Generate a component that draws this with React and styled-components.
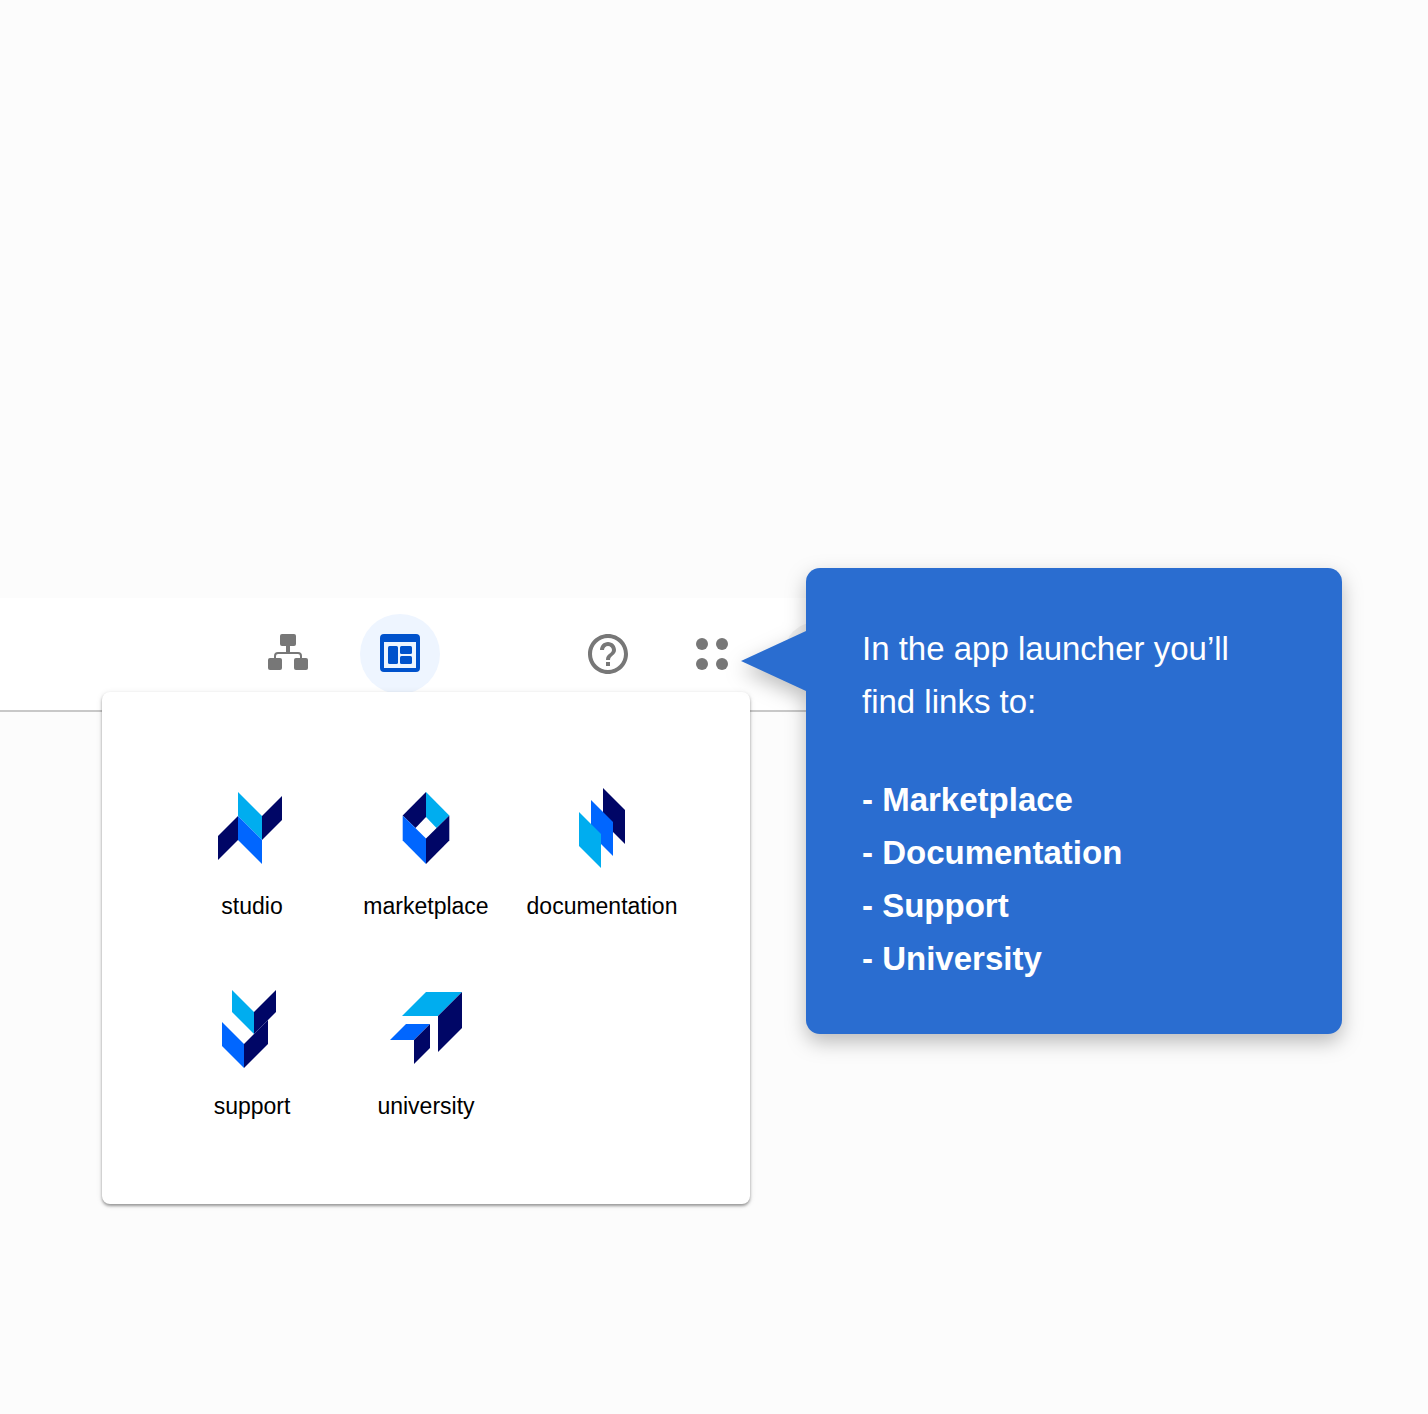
import React from "react";
import styled, { createGlobalStyle } from "styled-components";

const navy = "#000666";
const cyan = "#00adef";
const blue = "#0066ff";

const GlobalStyle = createGlobalStyle`
  *, *::before, *::after { box-sizing: border-box; }
  body {
    margin: 0;
    background: #fcfcfc;
    font-family: "Liberation Sans", Arial, Helvetica, sans-serif;
  }
`;

const Page = styled.div`
  min-height: 100vh;
  padding: 598px 0 80px;
  overflow-x: hidden;
`;

const Stage = styled.main`
  position: relative;
`;

const Header = styled.header`
  display: flex;
  gap: 128px;
  width: 60%;
  padding: 16px 0 16px 248px;
  overflow: hidden;
  background: #ffffff;
  border-bottom: 2px solid #c8c8c8;
`;

const Group = styled.nav`
  display: flex;
  align-items: center;
  flex: none;
  gap: ${({ $gap }) => $gap}px;
`;

const IconButton = styled.button`
  display: grid;
  place-items: center;
  width: 80px;
  height: 80px;
  padding: 0;
  border: 0;
  border-radius: 50%;
  cursor: pointer;
  color: ${({ $active }) => ($active ? "#0052cc" : "#777777")};
  background: ${({ $active }) => ($active ? "#eef5ff" : "transparent")};
`;

const Avatar = styled.button`
  width: 64px;
  height: 64px;
  margin-left: 8px;
  padding: 0;
  border: 0;
  border-radius: 50%;
  background: #f3f3f3;
`;

const Glyph = styled.svg`
  display: block;
  width: 40px;
  height: 40px;
  fill: currentColor;
`;

const Launcher = styled.nav`
  position: relative;
  display: grid;
  grid-template-columns: 174px 174px 178px;
  row-gap: 68px;
  width: 648px;
  margin: -20px 0 0 102px;
  padding: 96px 59px 84px 63px;
  border-radius: 8px;
  background: #ffffff;
  box-shadow: 0 2px 3px rgba(0, 0, 0, 0.36), 0 1px 6px rgba(0, 0, 0, 0.1);
`;

const AppLink = styled.a`
  display: flex;
  flex-direction: column;
  align-items: center;
  gap: 24px;
  color: #000000;
  font-size: 23px;
  line-height: 28px;
  text-decoration: none;
`;

const Logo = styled.svg`
  display: block;
  width: 80px;
  height: 80px;
`;

const Callout = styled.aside`
  position: absolute;
  top: -30px;
  left: 806px;
  width: 536px;
  padding: 54px 56px 49px;
  border-radius: 14px;
  background: #2a6dd0;
  color: #ffffff;
  font-size: 33px;
  line-height: 53px;
  filter: drop-shadow(0 8px 10px rgba(0, 0, 0, 0.26));

  &::before {
    content: "";
    position: absolute;
    top: 63px;
    right: 100%;
    width: 65px;
    height: 60px;
    background: inherit;
    clip-path: polygon(0 50%, 100% 0, 100% 100%);
  }
`;

const Lead = styled.p`
  margin: 0 0 45px;
`;

const LinkList = styled.ul`
  margin: 0;
  padding: 0;
  list-style: none;
  font-weight: 700;
`;

const apps = [
  {
    name: "studio",
    shapes: [
      [navy, "6,48 26,28 26,52 6,72"],
      [navy, "50,28 70,8 70,32 50,52"],
      [cyan, "26,4 50,28 50,52 26,28"],
      [blue, "26,28 50,52 50,76 26,52"],
    ],
  },
  {
    name: "marketplace",
    shapes: [
      [navy, "40,4 40,29 29.5,40 16.7,27.5"],
      [cyan, "40,4 63.3,27.5 50.5,40 40,29"],
      [blue, "16.7,27.5 40,50.5 40,76 16.7,52.5"],
      [navy, "63.3,27.5 63.3,52.5 40,76 40,50.5"],
    ],
  },
  {
    name: "documentation",
    shapes: [
      [navy, "41,0 63,22 63,56 41,34"],
      [blue, "29,12 51,34 51,68 29,46"],
      [cyan, "17,24 39,46 39,80 17,58"],
    ],
  },
  {
    name: "support",
    shapes: [
      [cyan, "20,2 42,24 42,46 20,24"],
      [navy, "42,24 64,2 64,24 42,46"],
      [blue, "10,34 32,56 32,80 10,58"],
      [navy, "32,56 56,32 56,56 32,80"],
    ],
  },
  {
    name: "university",
    shapes: [
      [cyan, "16,28 40,4 76,4 52,28"],
      [navy, "52,28 76,4 76,40 52,64"],
      [blue, "4,52 20,36 44,36 28,52"],
      [navy, "28,52 44,36 44,60 28,76"],
    ],
  },
];

const destinations = ["Marketplace", "Documentation", "Support", "University"];

function HierarchyIcon() {
  return (
    <Glyph viewBox="0 0 40 40" aria-hidden="true">
      <rect x="12" y="0" width="16" height="12" rx="2" />
      <rect x="18" y="11" width="4" height="8" />
      <path d="M7 25v-3a3 3 0 0 1 3-3h20a3 3 0 0 1 3 3v3" fill="none" stroke="currentColor" strokeWidth="2" />
      <rect x="0" y="24" width="14" height="12" rx="2" />
      <rect x="26" y="24" width="14" height="12" rx="2" />
    </Glyph>
  );
}

function PagesIcon() {
  return (
    <Glyph viewBox="0 0 40 40" aria-hidden="true">
      <path fillRule="evenodd" d="M4 0h32a4 4 0 0 1 4 4v30a4 4 0 0 1-4 4H4a4 4 0 0 1-4-4V4a4 4 0 0 1 4-4zM4 8v26h32V8z" />
      <rect x="8" y="12" width="10" height="18" rx="1.5" />
      <rect x="20" y="12" width="12" height="8" rx="1.5" />
      <rect x="20" y="22" width="12" height="8" rx="1.5" />
    </Glyph>
  );
}

function HelpIcon() {
  return (
    <Glyph viewBox="2 2 20 20" aria-hidden="true">
      <path d="M11 18h2v-2h-2v2zm1-16C6.48 2 2 6.48 2 12s4.48 10 10 10 10-4.48 10-10S17.52 2 12 2zm0 18c-4.41 0-8-3.59-8-8s3.59-8 8-8 8 3.59 8 8-3.59 8-8 8zm0-14c-2.21 0-4 1.79-4 4h2c0-1.1.9-2 2-2s2 .9 2 2c0 2-3 1.75-3 5h2c0-2.25 3-2.5 3-5 0-2.21-1.79-4-4-4z" />
    </Glyph>
  );
}

function AppsIcon() {
  return (
    <Glyph viewBox="0 0 40 40" aria-hidden="true">
      <circle cx="10" cy="10" r="6" />
      <circle cx="30" cy="10" r="6" />
      <circle cx="10" cy="30" r="6" />
      <circle cx="30" cy="30" r="6" />
    </Glyph>
  );
}

export default function App() {
  return (
    <Page>
      <GlobalStyle />
      <Stage>
        <Header>
          <Group $gap={32} aria-label="Views">
            <IconButton type="button" aria-label="Structure">
              <HierarchyIcon />
            </IconButton>
            <IconButton type="button" aria-label="Pages" $active>
              <PagesIcon />
            </IconButton>
          </Group>
          <Group $gap={24} aria-label="Account">
            <IconButton type="button" aria-label="Help">
              <HelpIcon />
            </IconButton>
            <IconButton type="button" aria-label="App launcher">
              <AppsIcon />
            </IconButton>
            <Avatar type="button" aria-label="Profile" />
          </Group>
        </Header>

        <Launcher aria-label="Apps">
          {apps.map(({ name, shapes }) => (
            <AppLink key={name} href={`#${name}`}>
              <Logo viewBox="0 0 80 80" aria-hidden="true">
                {shapes.map(([fill, points]) => (
                  <polygon key={points} fill={fill} points={points} />
                ))}
              </Logo>
              {name}
            </AppLink>
          ))}
        </Launcher>

        <Callout>
          <Lead>In the app launcher you’ll find links to:</Lead>
          <LinkList>
            {destinations.map((item) => (
              <li key={item}>- {item}</li>
            ))}
          </LinkList>
        </Callout>
      </Stage>
    </Page>
  );
}
